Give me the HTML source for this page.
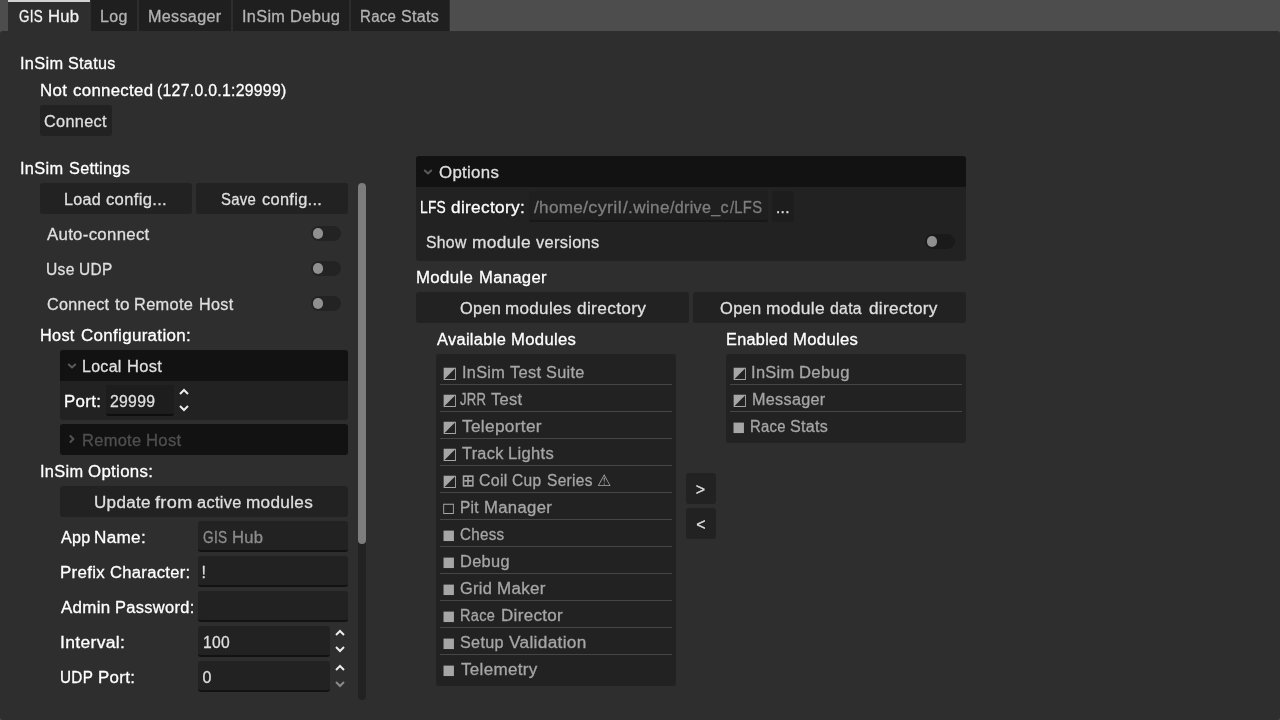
<!DOCTYPE html>
<html lang="en">
<head>
<meta charset="utf-8">
<title>GIS Hub</title>
<style>
html,body{margin:0;padding:0;}
body{width:1280px;height:720px;overflow:hidden;background:#4d4d4d;position:relative;font-family:"Liberation Sans", "DejaVu Sans", sans-serif;font-size:16px;}
.b{position:absolute;display:block;}
.L{position:absolute;left:0;top:0;width:1280px;height:720px;will-change:transform;}
.t{position:absolute;display:block;white-space:nowrap;transform-origin:0 0;line-height:23px;height:23px;font-weight:normal;font-style:normal;-webkit-text-stroke:0.3px currentColor;}
.s{font-family:"DejaVu Sans",sans-serif;font-size:16px;letter-spacing:0;-webkit-text-stroke:0;}
</style>
</head>
<body>
<div class="b" style="left:0;top:31px;width:1280px;height:689px;background:#2e2e2e;border-radius:3px"></div>
<div class="b" style="left:8px;top:0px;width:82px;height:31px;background:#2e2e2e;border-top:2px solid #d2d2d2;box-sizing:border-box;"></div>
<div class="b" style="left:90px;top:0px;width:48px;height:31px;background:#1f1f1f;border-left:1px solid #2d2d2d;border-right:1px solid #2d2d2d;box-sizing:border-box;"></div>
<div class="b" style="left:138px;top:0px;width:94px;height:31px;background:#1f1f1f;border-left:1px solid #2d2d2d;border-right:1px solid #2d2d2d;box-sizing:border-box;"></div>
<div class="b" style="left:232px;top:0px;width:118px;height:31px;background:#1f1f1f;border-left:1px solid #2d2d2d;border-right:1px solid #2d2d2d;box-sizing:border-box;"></div>
<div class="b" style="left:350px;top:0px;width:100px;height:31px;background:#1f1f1f;border-left:1px solid #2d2d2d;border-right:1px solid #2d2d2d;box-sizing:border-box;"></div>
<div class="b" style="left:40px;top:105px;width:72px;height:31px;background:#222222;border-radius:3px;"></div>
<div class="b" style="left:40px;top:183px;width:152px;height:31px;background:#222222;border-radius:3px;"></div>
<div class="b" style="left:196px;top:183px;width:152px;height:31px;background:#222222;border-radius:3px;"></div>
<div class="b" style="left:311.3px;top:226px;width:29.6px;height:15px;background:rgba(0,0,0,0.23);border-radius:7.5px"></div>
<div class="b" style="left:312.9px;top:228.4px;width:10.2px;height:10.2px;background:#909090;border-radius:50%"></div>
<div class="b" style="left:311.3px;top:261px;width:29.6px;height:15px;background:rgba(0,0,0,0.23);border-radius:7.5px"></div>
<div class="b" style="left:312.9px;top:263.4px;width:10.2px;height:10.2px;background:#909090;border-radius:50%"></div>
<div class="b" style="left:311.3px;top:296px;width:29.6px;height:15px;background:rgba(0,0,0,0.23);border-radius:7.5px"></div>
<div class="b" style="left:312.9px;top:298.4px;width:10.2px;height:10.2px;background:#909090;border-radius:50%"></div>
<div class="b" style="left:60px;top:350px;width:288px;height:31px;background:#121212;border-radius:3px 3px 0 0;"></div>
<div class="b" style="left:60px;top:381px;width:288px;height:39px;background:#222222;border-radius:0 0 3px 3px;"></div>
<svg class="b" style="left:64px;top:358px" width="16" height="16" viewBox="-8 -8 16 16"><path d="M-3.2 -1.5 L0 1.5 L3.2 -1.5" fill="none" stroke="#5a5a5a" stroke-width="2" stroke-linecap="round" stroke-linejoin="round"/></svg>
<div class="b" style="left:106px;top:385px;width:68px;height:31px;background:#1d1d1d;border-radius:3px;border-bottom:2px solid #0e0e0e;box-sizing:border-box;"></div>
<svg class="b" style="left:176px;top:384px" width="16" height="16" viewBox="-8 -8 16 16"><path d="M-4 2 L0 -2 L4 2" fill="none" stroke="#ececec" stroke-width="2" stroke-linecap="butt" stroke-linejoin="miter"/></svg>
<svg class="b" style="left:176px;top:400px" width="16" height="16" viewBox="-8 -8 16 16"><path d="M-4 -2 L0 2 L4 -2" fill="none" stroke="#ececec" stroke-width="2" stroke-linecap="butt" stroke-linejoin="miter"/></svg>
<div class="b" style="left:60px;top:424px;width:288px;height:31px;background:#121212;border-radius:3px;"></div>
<svg class="b" style="left:63.5px;top:431.4px" width="16" height="16" viewBox="-8 -8 16 16"><path d="M-1.6 -3 L1.4 0 L-1.6 3" fill="none" stroke="#525252" stroke-width="2" stroke-linecap="round" stroke-linejoin="round"/></svg>
<div class="b" style="left:60px;top:486px;width:288px;height:31px;background:#222222;border-radius:3px;"></div>
<div class="b" style="left:198px;top:521px;width:150px;height:31px;background:#222222;border-radius:3px;border-bottom:2px solid #121212;box-sizing:border-box;"></div>
<div class="b" style="left:198px;top:556px;width:150px;height:31px;background:#222222;border-radius:3px;border-bottom:2px solid #121212;box-sizing:border-box;"></div>
<div class="b" style="left:198px;top:591px;width:150px;height:31px;background:#222222;border-radius:3px;border-bottom:2px solid #121212;box-sizing:border-box;"></div>
<div class="b" style="left:198px;top:626px;width:132px;height:31px;background:#222222;border-radius:3px;border-bottom:2px solid #121212;box-sizing:border-box;"></div>
<div class="b" style="left:198px;top:661px;width:132px;height:31px;background:#222222;border-radius:3px;border-bottom:2px solid #121212;box-sizing:border-box;"></div>
<svg class="b" style="left:332px;top:625px" width="16" height="16" viewBox="-8 -8 16 16"><path d="M-4 2 L0 -2 L4 2" fill="none" stroke="#ececec" stroke-width="2" stroke-linecap="butt" stroke-linejoin="miter"/></svg>
<svg class="b" style="left:332px;top:641px" width="16" height="16" viewBox="-8 -8 16 16"><path d="M-4 -2 L0 2 L4 -2" fill="none" stroke="#ececec" stroke-width="2" stroke-linecap="butt" stroke-linejoin="miter"/></svg>
<svg class="b" style="left:332px;top:660px" width="16" height="16" viewBox="-8 -8 16 16"><path d="M-4 2 L0 -2 L4 2" fill="none" stroke="#ececec" stroke-width="2" stroke-linecap="butt" stroke-linejoin="miter"/></svg>
<svg class="b" style="left:332px;top:676px" width="16" height="16" viewBox="-8 -8 16 16"><path d="M-4 -2 L0 2 L4 -2" fill="none" stroke="#8a8a8a" stroke-width="2" stroke-linecap="butt" stroke-linejoin="miter"/></svg>
<div class="b" style="left:358px;top:183px;width:8px;height:517px;background:#222222;border-radius:4px;"></div>
<div class="b" style="left:358px;top:183px;width:8px;height:361px;background:#7d7d7d;border-radius:4px;"></div>
<div class="b" style="left:416px;top:156px;width:550px;height:31px;background:#121212;border-radius:3px 3px 0 0;"></div>
<div class="b" style="left:416px;top:187px;width:550px;height:74px;background:#222222;border-radius:0 0 3px 3px;"></div>
<svg class="b" style="left:420px;top:164px" width="16" height="16" viewBox="-8 -8 16 16"><path d="M-3.2 -1.5 L0 1.5 L3.2 -1.5" fill="none" stroke="#5a5a5a" stroke-width="2" stroke-linecap="round" stroke-linejoin="round"/></svg>
<div class="b" style="left:529px;top:191px;width:239px;height:31px;background:#1f1f1f;border-radius:3px;border-bottom:2px solid #181818;box-sizing:border-box;"></div>
<div class="b" style="left:772px;top:191px;width:22px;height:31px;background:#1d1d1d;border-radius:3px;"></div>
<div class="b" style="left:925.3px;top:234px;width:29.6px;height:15px;background:rgba(0,0,0,0.23);border-radius:7.5px"></div>
<div class="b" style="left:926.9px;top:236.4px;width:10.2px;height:10.2px;background:#909090;border-radius:50%"></div>
<div class="b" style="left:416px;top:292px;width:273px;height:31px;background:#222222;border-radius:3px;"></div>
<div class="b" style="left:693px;top:292px;width:273px;height:31px;background:#222222;border-radius:3px;"></div>
<div class="b" style="left:436px;top:354px;width:240px;height:332px;background:#222222;border-radius:3px;"></div>
<div class="b" style="left:440px;top:384px;width:232px;height:1px;background:#464646;"></div>
<div class="b" style="left:440px;top:411px;width:232px;height:1px;background:#464646;"></div>
<div class="b" style="left:440px;top:438px;width:232px;height:1px;background:#464646;"></div>
<div class="b" style="left:440px;top:465px;width:232px;height:1px;background:#464646;"></div>
<div class="b" style="left:440px;top:492px;width:232px;height:1px;background:#464646;"></div>
<div class="b" style="left:440px;top:519px;width:232px;height:1px;background:#464646;"></div>
<div class="b" style="left:440px;top:546px;width:232px;height:1px;background:#464646;"></div>
<div class="b" style="left:440px;top:573px;width:232px;height:1px;background:#464646;"></div>
<div class="b" style="left:440px;top:600px;width:232px;height:1px;background:#464646;"></div>
<div class="b" style="left:440px;top:627px;width:232px;height:1px;background:#464646;"></div>
<div class="b" style="left:440px;top:654px;width:232px;height:1px;background:#464646;"></div>
<div class="b" style="left:726px;top:354px;width:240px;height:89px;background:#222222;border-radius:3px;"></div>
<div class="b" style="left:730px;top:384px;width:232px;height:1px;background:#464646;"></div>
<div class="b" style="left:730px;top:411px;width:232px;height:1px;background:#464646;"></div>
<div class="b" style="left:686px;top:473px;width:30px;height:31px;background:#222222;border-radius:3px;"></div>
<div class="b" style="left:686px;top:508px;width:30px;height:31px;background:#222222;border-radius:3px;"></div>
<div class="L">
<span class="g " style="color:#f2f2f2"><span class="t" style="left:18.65px;top:5px;letter-spacing:0.3px;transform:scaleX(0.8381);">GIS</span> <span class="t" style="left:47.67px;top:5px;letter-spacing:0.3px;transform:scaleX(1.0366);">Hub</span></span>
<span class="g " style="color:#b3b3b3"><span class="t" style="left:100.15px;top:5px;letter-spacing:0.3px;transform:scaleX(0.9993);">Log</span></span>
<span class="g " style="color:#b3b3b3"><span class="t" style="left:147.51px;top:5px;letter-spacing:0.3px;transform:scaleX(1.0107);">Messager</span></span>
<span class="g " style="color:#b3b3b3"><span class="t" style="left:242.01px;top:5px;letter-spacing:0.3px;transform:scaleX(1.0188);">InSim</span> <span class="t" style="left:289.6px;top:5px;letter-spacing:0.3px;transform:scaleX(1.0335);">Debug</span></span>
<span class="g " style="color:#b3b3b3"><span class="t" style="left:359.65px;top:5px;letter-spacing:0.3px;transform:scaleX(0.9398);">Race</span> <span class="t" style="left:400.87px;top:5px;letter-spacing:0.3px;transform:scaleX(1.006);">Stats</span></span>
<span class="g " style="color:#fff"><span class="t" style="left:19.5px;top:52px;letter-spacing:0.3px;transform:scaleX(1.0221);">InSim</span> <span class="t" style="left:67.85px;top:52px;letter-spacing:0.3px;transform:scaleX(1.0097);">Status</span></span>
<span class="g " style="color:#fff"><span class="t" style="left:40.3px;top:79px;letter-spacing:0.3px;transform:scaleX(1.0537);">Not</span> <span class="t" style="left:73.0px;top:79px;letter-spacing:0.3px;transform:scaleX(1.0504);">connected</span> <span class="t" style="left:156.91px;top:79px;letter-spacing:0.3px;transform:scaleX(0.9855);">(127.0.0.1:29999)</span></span>
<span class="g " style="color:#dfdfdf"><span class="t" style="left:44.25px;top:110px;letter-spacing:0.3px;transform:scaleX(1.0184);">Connect</span></span>
<span class="g " style="color:#fff"><span class="t" style="left:19.5px;top:157px;letter-spacing:0.3px;transform:scaleX(1.0221);">InSim</span> <span class="t" style="left:68.5px;top:157px;letter-spacing:0.3px;transform:scaleX(1.015);">Settings</span></span>
<span class="g " style="color:#dfdfdf"><span class="t" style="left:64.0px;top:188px;letter-spacing:0.3px;transform:scaleX(1.0064);">Load</span> <span class="t" style="left:106.3px;top:188px;letter-spacing:0.3px;transform:scaleX(1.0383);">config...</span></span>
<span class="g " style="color:#dfdfdf"><span class="t" style="left:220.75px;top:188px;letter-spacing:0.3px;transform:scaleX(0.9324);">Save</span> <span class="t" style="left:261.75px;top:188px;letter-spacing:0.3px;transform:scaleX(1.0235);">config...</span></span>
<span class="g " style="color:#dfdfdf"><span class="t" style="left:46.75px;top:223px;letter-spacing:0.3px;transform:scaleX(1.048);">Auto-connect</span></span>
<span class="g " style="color:#dfdfdf"><span class="t" style="left:46.1px;top:258px;letter-spacing:0.3px;transform:scaleX(0.9751);">Use</span> <span class="t" style="left:79.4px;top:258px;letter-spacing:0.3px;transform:scaleX(0.9653);">UDP</span></span>
<span class="g " style="color:#dfdfdf"><span class="t" style="left:46.85px;top:293px;letter-spacing:0.3px;transform:scaleX(1.0111);">Connect</span> <span class="t" style="left:114.79px;top:293px;letter-spacing:0.3px;transform:scaleX(1.0702);">to</span> <span class="t" style="left:134.25px;top:293px;letter-spacing:0.3px;transform:scaleX(1.0239);">Remote</span> <span class="t" style="left:198.58px;top:293px;letter-spacing:0.3px;transform:scaleX(1.0111);">Host</span></span>
<span class="g " style="color:#fff"><span class="t" style="left:39.51px;top:324px;letter-spacing:0.3px;transform:scaleX(1.0175);">Host</span> <span class="t" style="left:81.0px;top:324px;letter-spacing:0.3px;transform:scaleX(1.0593);">Configuration:</span></span>
<span class="g " style="color:#dfdfdf"><span class="t" style="left:81.96px;top:355px;letter-spacing:0.3px;transform:scaleX(0.998);">Local</span> <span class="t" style="left:126.58px;top:355px;letter-spacing:0.3px;transform:scaleX(1.0323);">Host</span></span>
<span class="g " style="color:#fff"><span class="t" style="left:64.25px;top:390px;letter-spacing:0.3px;transform:scaleX(1.0537);">Port:</span></span>
<span class="g " style="color:#dfdfdf"><span class="t" style="left:110.25px;top:390px;letter-spacing:0.3px;transform:scaleX(0.9841);">29999</span></span>
<span class="g " style="color:#4f4f4f"><span class="t" style="left:82.25px;top:429px;letter-spacing:0.3px;transform:scaleX(1.0279);">Remote</span> <span class="t" style="left:146.25px;top:429px;letter-spacing:0.3px;transform:scaleX(1.0403);">Host</span></span>
<span class="g " style="color:#fff"><span class="t" style="left:39.5px;top:460px;letter-spacing:0.3px;transform:scaleX(1.0221);">InSim</span> <span class="t" style="left:88.0px;top:460px;letter-spacing:0.3px;transform:scaleX(1.0519);">Options:</span></span>
<span class="g " style="color:#dfdfdf"><span class="t" style="left:94.0px;top:491px;letter-spacing:0.3px;transform:scaleX(1.0644);">Update</span> <span class="t" style="left:155.44px;top:491px;letter-spacing:0.3px;transform:scaleX(1.1313);">from</span> <span class="t" style="left:197.25px;top:491px;letter-spacing:0.3px;transform:scaleX(1.0229);">active</span> <span class="t" style="left:246.39px;top:491px;letter-spacing:0.3px;transform:scaleX(1.0722);">modules</span></span>
<span class="g " style="color:#fff"><span class="t" style="left:60.63px;top:526px;letter-spacing:0.3px;transform:scaleX(1.0077);">App</span> <span class="t" style="left:94.06px;top:526px;letter-spacing:0.3px;transform:scaleX(1.0695);">Name:</span></span>
<span class="g " style="color:#fff"><span class="t" style="left:60.33px;top:561px;letter-spacing:0.3px;transform:scaleX(1.0533);">Prefix</span> <span class="t" style="left:109.69px;top:561px;letter-spacing:0.3px;transform:scaleX(1.0355);">Character:</span></span>
<span class="g " style="color:#fff"><span class="t" style="left:60.5px;top:596px;letter-spacing:0.3px;transform:scaleX(1.0583);">Admin</span> <span class="t" style="left:114.5px;top:596px;letter-spacing:0.3px;transform:scaleX(1.0276);">Password:</span></span>
<span class="g " style="color:#fff"><span class="t" style="left:60.08px;top:631px;letter-spacing:0.3px;transform:scaleX(1.0935);">Interval:</span></span>
<span class="g " style="color:#fff"><span class="t" style="left:60.33px;top:666px;letter-spacing:0.3px;transform:scaleX(0.9549);">UDP</span> <span class="t" style="left:98.25px;top:666px;letter-spacing:0.3px;transform:scaleX(1.0537);">Port:</span></span>
<span class="g " style="color:#8d8d8d"><span class="t" style="left:202.85px;top:526px;letter-spacing:0.3px;transform:scaleX(0.8536);">GIS</span> <span class="t" style="left:231.93px;top:526px;letter-spacing:0.3px;transform:scaleX(1.0368);">Hub</span></span>
<span class="g " style="color:#dfdfdf"><span class="t" style="left:201.5px;top:561px;letter-spacing:0.3px;">!</span></span>
<span class="g " style="color:#dfdfdf"><span class="t" style="left:202.71px;top:631px;letter-spacing:0.3px;transform:scaleX(0.9779);">100</span></span>
<span class="g " style="color:#dfdfdf"><span class="t" style="left:202.56px;top:666px;letter-spacing:0.3px;">0</span></span>
<span class="g " style="color:#dfdfdf"><span class="t" style="left:438.62px;top:161px;letter-spacing:0.3px;transform:scaleX(1.0514);">Options</span></span>
<span class="g " style="color:#fff"><span class="t" style="left:420.3px;top:196px;letter-spacing:0.3px;transform:scaleX(0.8592);">LFS</span> <span class="t" style="left:451.05px;top:196px;letter-spacing:0.3px;transform:scaleX(1.0766);">directory:</span></span>
<span class="g " style="color:#7e7e7e"><span class="t" style="left:533.79px;top:196px;letter-spacing:0.3px;transform:scaleX(1.0698);">/home</span><span class="t" style="left:583.25px;top:196px;letter-spacing:0.3px;transform:scaleX(1.1251);">/cyril</span><span class="t" style="left:623.25px;top:196px;letter-spacing:0.3px;transform:scaleX(1.0724);">/.wine</span><span class="t" style="left:670.4px;top:196px;letter-spacing:0.3px;transform:scaleX(1.0052);">/drive_c</span><span class="t" style="left:730.4px;top:196px;letter-spacing:0.3px;transform:scaleX(0.9214);">/LFS</span></span>
<span class="g " style="color:#dfdfdf"><span class="t" style="left:776.05px;top:196px;letter-spacing:0.3px;transform:scaleX(0.9648);">...</span></span>
<span class="g " style="color:#dfdfdf"><span class="t" style="left:426.25px;top:231px;letter-spacing:0.3px;transform:scaleX(0.9836);">Show</span> <span class="t" style="left:472.2px;top:231px;letter-spacing:0.3px;transform:scaleX(1.0845);">module</span> <span class="t" style="left:535.7px;top:231px;letter-spacing:0.3px;transform:scaleX(1.0255);">versions</span></span>
<span class="g " style="color:#fff"><span class="t" style="left:416.33px;top:266px;letter-spacing:0.3px;transform:scaleX(1.053);">Module</span> <span class="t" style="left:478.71px;top:266px;letter-spacing:0.3px;transform:scaleX(1.0397);">Manager</span></span>
<span class="g " style="color:#dfdfdf"><span class="t" style="left:459.8px;top:297px;letter-spacing:0.3px;transform:scaleX(1.0231);">Open</span> <span class="t" style="left:504.7px;top:297px;letter-spacing:0.3px;transform:scaleX(1.0653);">modules</span> <span class="t" style="left:576.55px;top:297px;letter-spacing:0.3px;transform:scaleX(1.0818);">directory</span></span>
<span class="g " style="color:#dfdfdf"><span class="t" style="left:720.29px;top:297px;letter-spacing:0.3px;transform:scaleX(1.0302);">Open</span> <span class="t" style="left:765.76px;top:297px;letter-spacing:0.3px;transform:scaleX(1.086);">module</span> <span class="t" style="left:830.0px;top:297px;letter-spacing:0.3px;transform:scaleX(0.9857);">data</span> <span class="t" style="left:869.0px;top:297px;letter-spacing:0.3px;transform:scaleX(1.0735);">directory</span></span>
<span class="g " style="color:#fff"><span class="t" style="left:436.58px;top:328px;letter-spacing:0.3px;transform:scaleX(1.0256);">Available</span> <span class="t" style="left:510.51px;top:328px;letter-spacing:0.3px;transform:scaleX(1.0422);">Modules</span></span>
<span class="g " style="color:#fff"><span class="t" style="left:726.25px;top:328px;letter-spacing:0.3px;transform:scaleX(1.0152);">Enabled</span> <span class="t" style="left:792.51px;top:328px;letter-spacing:0.3px;transform:scaleX(1.0422);">Modules</span></span>
<span class="t s" style="left:442px;top:361px;color:#a6a6a6;">◩</span>
<span class="g " style="color:#a6a6a6"><span class="t" style="left:461.5px;top:361px;letter-spacing:0.3px;transform:scaleX(1.0165);">InSim</span> <span class="t" style="left:509.79px;top:361px;letter-spacing:0.3px;transform:scaleX(1.0316);">Test</span> <span class="t" style="left:545.75px;top:361px;letter-spacing:0.3px;transform:scaleX(1.0182);">Suite</span></span>
<span class="t s" style="left:442px;top:388px;color:#a6a6a6;">◩</span>
<span class="g " style="color:#a6a6a6"><span class="t" style="left:460.2px;top:388px;letter-spacing:0.3px;transform:scaleX(0.8203);">JRR</span> <span class="t" style="left:491.2px;top:388px;letter-spacing:0.3px;transform:scaleX(1.029);">Test</span></span>
<span class="t s" style="left:442px;top:415px;color:#a6a6a6;">◩</span>
<span class="g " style="color:#a6a6a6"><span class="t" style="left:462.4px;top:415px;letter-spacing:0.3px;transform:scaleX(1.078);">Teleporter</span></span>
<span class="t s" style="left:442px;top:442px;color:#a6a6a6;">◩</span>
<span class="g " style="color:#a6a6a6"><span class="t" style="left:462.25px;top:442px;letter-spacing:0.3px;transform:scaleX(1.0164);">Track</span> <span class="t" style="left:508.4px;top:442px;letter-spacing:0.3px;transform:scaleX(1.0331);">Lights</span></span>
<span class="t s" style="left:442px;top:469px;color:#a6a6a6;">◩</span>
<span class="t s" style="left:461.28px;top:469px;color:#a6a6a6;-webkit-text-stroke:0.3px currentColor;">⊞</span>
<span class="t s" style="left:597px;top:469px;color:#a6a6a6;">⚠</span>
<span class="g " style="color:#a6a6a6"><span class="t" style="left:479.37px;top:469px;letter-spacing:0.3px;transform:scaleX(0.9927);">Coil</span> <span class="t" style="left:512.29px;top:469px;letter-spacing:0.3px;transform:scaleX(0.9696);">Cup</span> <span class="t" style="left:546.8px;top:469px;letter-spacing:0.3px;transform:scaleX(0.9689);">Series</span></span>
<span class="t s" style="left:442px;top:496px;color:#a6a6a6;">◻</span>
<span class="g " style="color:#a6a6a6"><span class="t" style="left:459.6px;top:496px;letter-spacing:0.3px;transform:scaleX(0.9652);">Pit</span> <span class="t" style="left:484.4px;top:496px;letter-spacing:0.3px;transform:scaleX(1.0438);">Manager</span></span>
<span class="t s" style="left:442px;top:523px;color:#a6a6a6;">◼</span>
<span class="g " style="color:#a6a6a6"><span class="t" style="left:460.23px;top:523px;letter-spacing:0.3px;transform:scaleX(0.9483);">Chess</span></span>
<span class="t s" style="left:442px;top:550px;color:#a6a6a6;">◼</span>
<span class="g " style="color:#a6a6a6"><span class="t" style="left:460.05px;top:550px;letter-spacing:0.3px;transform:scaleX(1.024);">Debug</span></span>
<span class="t s" style="left:442px;top:577px;color:#a6a6a6;">◼</span>
<span class="g " style="color:#a6a6a6"><span class="t" style="left:460.05px;top:577px;letter-spacing:0.3px;transform:scaleX(1.0223);">Grid</span> <span class="t" style="left:496.52px;top:577px;letter-spacing:0.3px;transform:scaleX(1.0619);">Maker</span></span>
<span class="t s" style="left:442px;top:604px;color:#a6a6a6;">◼</span>
<span class="g " style="color:#a6a6a6"><span class="t" style="left:460.05px;top:604px;letter-spacing:0.3px;transform:scaleX(0.9095);">Race</span> <span class="t" style="left:500.58px;top:604px;letter-spacing:0.3px;transform:scaleX(1.0628);">Director</span></span>
<span class="t s" style="left:442px;top:631px;color:#a6a6a6;">◼</span>
<span class="g " style="color:#a6a6a6"><span class="t" style="left:460.05px;top:631px;letter-spacing:0.3px;transform:scaleX(1.0106);">Setup</span> <span class="t" style="left:508.55px;top:631px;letter-spacing:0.3px;transform:scaleX(1.0763);">Validation</span></span>
<span class="t s" style="left:442px;top:658px;color:#a6a6a6;">◼</span>
<span class="g " style="color:#a6a6a6"><span class="t" style="left:460.71px;top:658px;letter-spacing:0.3px;transform:scaleX(1.0642);">Telemetry</span></span>
<span class="t s" style="left:732px;top:361px;color:#a6a6a6;">◩</span>
<span class="g " style="color:#a6a6a6"><span class="t" style="left:750.65px;top:361px;letter-spacing:0.3px;transform:scaleX(1.0277);">InSim</span> <span class="t" style="left:798.75px;top:361px;letter-spacing:0.3px;transform:scaleX(1.0433);">Debug</span></span>
<span class="t s" style="left:732px;top:388px;color:#a6a6a6;">◩</span>
<span class="g " style="color:#a6a6a6"><span class="t" style="left:751.75px;top:388px;letter-spacing:0.3px;transform:scaleX(1.0124);">Messager</span></span>
<span class="t s" style="left:732px;top:415px;color:#a6a6a6;">◼</span>
<span class="g " style="color:#a6a6a6"><span class="t" style="left:749.51px;top:415px;letter-spacing:0.3px;transform:scaleX(0.9276);">Race</span> <span class="t" style="left:790.15px;top:415px;letter-spacing:0.3px;transform:scaleX(1.0062);">Stats</span></span>
<span class="g " style="color:#dfdfdf"><span class="t" style="left:695.8px;top:478px;letter-spacing:0.3px;">&gt;</span></span>
<span class="g " style="color:#dfdfdf"><span class="t" style="left:696.36px;top:513px;letter-spacing:0.3px;">&lt;</span></span>
</div>
</body>
</html>
